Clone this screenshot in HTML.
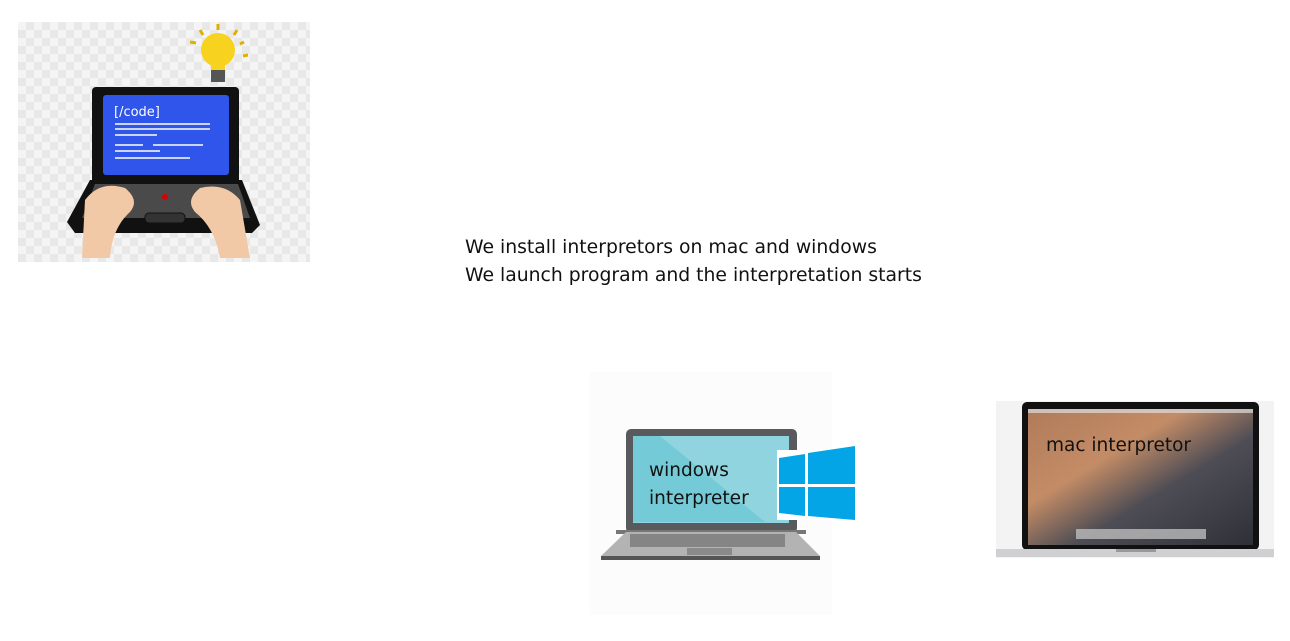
<!DOCTYPE html>
<html><head><style>
body{margin:0;width:1290px;height:641px;background:#fff;position:relative;overflow:hidden;font-family:"DejaVu Sans","Liberation Sans",sans-serif}
.a{position:absolute}
.t{position:absolute;left:465px;font-size:18.8px;color:#111;letter-spacing:0px;white-space:nowrap}
</style></head><body>
<div class="a" style="left:18px;top:22px;width:292px;height:240px;background-color:#f4f4f4;background-image:linear-gradient(45deg,#e8e8e8 25%,transparent 25%,transparent 75%,#e8e8e8 75%),linear-gradient(45deg,#e8e8e8 25%,transparent 25%,transparent 75%,#e8e8e8 75%);background-size:16px 16px;background-position:0 0,8px 8px"></div>
<svg class="a" style="left:0;top:0" width="320" height="270">
<circle cx="218" cy="50" r="17" fill="#f7d21e"/>
<rect x="211" y="62" width="14" height="20" fill="#f7d21e"/>
<rect x="211" y="70" width="14" height="12" fill="#555"/>
<g stroke="#e0b000" stroke-width="3"><line x1="218" y1="24" x2="218" y2="30"/><line x1="200" y1="30" x2="203" y2="35"/><line x1="237" y1="30" x2="234" y2="35"/><line x1="190" y1="42" x2="196" y2="43"/><line x1="244" y1="42" x2="240" y2="44"/><line x1="243" y1="56" x2="248" y2="55"/></g>
<rect x="92" y="87" width="147" height="97" rx="4" fill="#111"/>
<rect x="103" y="95" width="126" height="80" rx="3" fill="#2f55ea"/>
<text x="114" y="116" fill="#fff" font-size="13" font-family="DejaVu Sans">[/code]</text>
<g stroke="#fff" stroke-width="1.5"><line x1="115" y1="124" x2="210" y2="124"/><line x1="115" y1="129" x2="210" y2="129"/><line x1="115" y1="135" x2="157" y2="135"/><line x1="115" y1="145" x2="143" y2="145"/><line x1="153" y1="145" x2="203" y2="145"/><line x1="115" y1="151" x2="160" y2="151"/><line x1="115" y1="158" x2="190" y2="158"/></g>
<path d="M90 180 L242 180 L260 225 L252 233 L75 233 L67 222 Z" fill="#111"/>
<path d="M95 184 L238 184 L250 218 L82 218 Z" fill="#4a4a4a"/>
<rect x="145" y="213" width="40" height="10" rx="4" fill="#333" stroke="#111"/>
<path d="M85 200 Q100 180 125 188 Q140 200 130 212 Q112 228 110 258 L82 258 Z" fill="#f2c9a6"/>
<path d="M240 200 Q225 182 200 188 Q185 200 195 212 Q215 228 220 258 L250 258 Z" fill="#f2c9a6"/>
<circle cx="165" cy="197" r="3" fill="#d00"/>
</svg>
<div class="t" style="top:237px">We install interpretors on mac and windows</div>
<div class="t" style="top:265px">We launch program and the interpretation starts</div>

<div class="a" style="left:590px;top:372px;width:242px;height:243px;background:#fcfcfc"></div>
<svg class="a" style="left:590px;top:372px" width="270" height="243">
<rect x="36" y="57" width="171" height="104" rx="5" fill="#595a5e"/>
<rect x="43" y="64" width="156" height="87" fill="#8fd4de"/>
<path d="M43 64 L70 64 L175 150 L43 150 Z" fill="#62c5d2" opacity=".6"/>
<rect x="26" y="158" width="190" height="4" fill="#777"/>
<path d="M36 160 L206 160 L230 184 L11 184 Z" fill="#b3b3b3"/>
<rect x="11" y="184" width="219" height="4" fill="#555"/>
<rect x="40" y="162" width="155" height="13" fill="#666" opacity=".6"/>
<rect x="97" y="176" width="45" height="7" fill="#8a8a8a"/>
<rect x="187" y="78" width="78" height="70" fill="#fff"/>
<path d="M189 86 L215 82 L215 112 L189 112 Z M218 81 L265 74 L265 112 L218 112 Z M189 115 L215 115 L215 144 L189 141 Z M218 115 L265 115 L265 148 L218 144 Z" fill="#04a5e6"/>
<text x="59" y="104" font-size="18.5" fill="#111" font-family="DejaVu Sans">windows</text>
<text x="59" y="132" font-size="18.5" fill="#111" font-family="DejaVu Sans">interpreter</text>
</svg>

<div class="a" style="left:996px;top:401px;width:278px;height:157px;background:#f3f3f3"></div>
<svg class="a" style="left:996px;top:401px" width="278" height="157">
<defs><linearGradient id="g" x1="0" y1="0" x2="1" y2="1"><stop offset="0" stop-color="#b07a5a"/><stop offset=".35" stop-color="#c48c66"/><stop offset=".6" stop-color="#4e4d55"/><stop offset="1" stop-color="#2e3038"/></linearGradient></defs>
<rect x="26" y="1" width="237" height="148" rx="5" fill="#111"/>
<rect x="32" y="8" width="225" height="136" fill="url(#g)"/>
<rect x="32" y="8" width="225" height="4" fill="#ddd" opacity=".7"/>
<rect x="80" y="128" width="130" height="10" fill="#bbb" opacity=".8"/>
<rect x="0" y="148" width="278" height="8" fill="#d0d0d2"/>
<rect x="120" y="148" width="40" height="3" fill="#999"/>
<text x="50" y="50" font-size="18.5" fill="#111" font-family="DejaVu Sans">mac interpretor</text>
</svg>
</body></html>
